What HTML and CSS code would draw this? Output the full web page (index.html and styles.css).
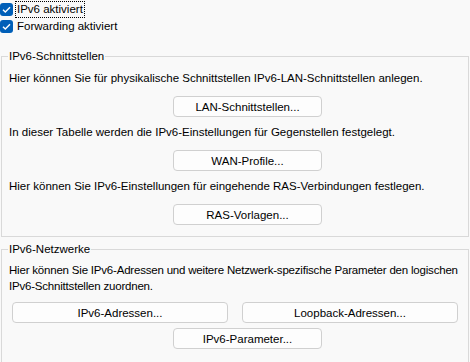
FILE: index.html
```html
<!DOCTYPE html>
<html lang="de">
  <head>
    <meta charset="UTF-8" />
    <title>IPv6</title>
    <link rel="stylesheet" href="styles.css">
  </head>
  <body>
    <!-- Schalter -->
    <div class="checks">
      <label class="check">
        <span class="box"><svg width="13" height="13" viewBox="0 0 13 13"><path d="M3 6.8l2.3 2.3L10 4.3" fill="none" stroke="#fff" stroke-width="1.4"/></svg></span>
        <span class="label focus">IPv6 aktiviert</span>
      </label>
      <label class="check">
        <span class="box"><svg width="13" height="13" viewBox="0 0 13 13"><path d="M3 6.8l2.3 2.3L10 4.3" fill="none" stroke="#fff" stroke-width="1.4"/></svg></span>
        <span class="label">Forwarding aktiviert</span>
      </label>
    </div>

    <!-- Schnittstellen -->
    <fieldset class="group group-if">
      <legend>IPv6-Schnittstellen</legend>
      <p>Hier können Sie für physikalische Schnittstellen IPv6-LAN-Schnittstellen anlegen.</p>
      <div class="row"><button class="btn btn-small">LAN-Schnittstellen...</button></div>
      <p>In dieser Tabelle werden die IPv6-Einstellungen für Gegenstellen festgelegt.</p>
      <div class="row"><button class="btn btn-small">WAN-Profile...</button></div>
      <p>Hier können Sie IPv6-Einstellungen für eingehende RAS-Verbindungen festlegen.</p>
      <div class="row"><button class="btn btn-small">RAS-Vorlagen...</button></div>
    </fieldset>

    <!-- Netzwerke -->
    <fieldset class="group group-net">
      <legend>IPv6-Netzwerke</legend>
      <p class="two-lines">Hier können Sie IPv6-Adressen und weitere Netzwerk-spezifische Parameter den logischen<br>IPv6-Schnittstellen zuordnen.</p>
      <div class="pair">
        <button class="btn">IPv6-Adressen...</button>
        <button class="btn">Loopback-Adressen...</button>
      </div>
      <div class="row row-last"><button class="btn btn-small">IPv6-Parameter...</button></div>
    </fieldset>
  </body>
</html>
```

FILE: styles.css
```css
/* Grundlayout */
body {
  margin: 0;
  background-color: #f9f9f9;
  font-family: "Liberation Sans", Arial, sans-serif;
  font-size: 11.5px;
  color: #000;
}

/* Checkboxen */
.checks {
  display: flex;
  flex-direction: column;
}

.check {
  display: flex;
  align-items: center;
  height: 16px;
  margin-top: 1px;
}

.box {
  width: 13px;
  height: 13px;
  border-radius: 3px;
  background-color: #005fb8;
  display: flex;
}

.label {
  margin-left: 2px;
  padding: 0 1px;
  line-height: 15px;
  border: 1px dotted transparent;
}

.label.focus {
  border-color: #000;
}

/* Gruppen */
.group {
  margin: 0 1px;
  border: 1px solid #d9d9d9;
  padding: 0 7px;
}

.group legend {
  padding: 0 1px;
  margin-left: -1px;
  line-height: 16px;
}

.group-if {
  margin-top: 14px;
  padding-bottom: 11px;
}

.group-net {
  margin-top: 4px;
  padding-bottom: 15px;
}

.group p {
  margin: 6px 0 0;
  line-height: 16px;
  white-space: nowrap;
}

.group p.two-lines {
  margin-top: 5px;
  letter-spacing: -0.2px;
}

.group-if .row + p {
  margin-top: 7px;
}

.row {
  margin-top: 10px;
  padding-left: 164px;
}

.row-last {
  margin-top: 5px;
}

.pair {
  display: grid;
  grid-template-columns: 216px 216px;
  column-gap: 14px;
  margin-top: 8px;
  padding-left: 3px;
}

/* Buttons */
.btn {
  height: 21px;
  padding: 0;
  border: 1px solid #d0d0d0;
  border-radius: 4px;
  background-color: #fdfdfd;
  font-family: inherit;
  font-size: 11.5px;
  color: #000;
}

.btn-small {
  width: 149px;
}
```
